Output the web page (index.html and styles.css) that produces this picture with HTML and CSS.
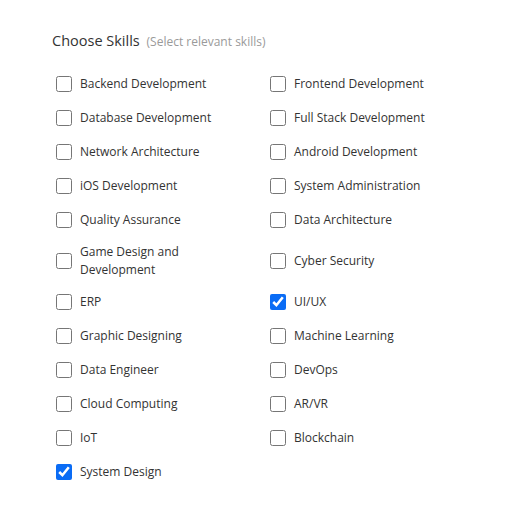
FILE: index.html
```html
<!DOCTYPE html>
<html>
<head>
<meta charset="utf-8">
<link rel="stylesheet" href="styles.css">
</head>
<body>
<div class="panel">
  <div class="title">Choose Skills <span class="hint">(Select relevant skills)</span></div>
  <div class="grid">
    <label class="item"><input type="checkbox"><span>Backend Development</span></label>
    <label class="item"><input type="checkbox"><span>Frontend Development</span></label>
    <label class="item"><input type="checkbox"><span>Database Development</span></label>
    <label class="item"><input type="checkbox"><span>Full Stack Development</span></label>
    <label class="item"><input type="checkbox"><span>Network Architecture</span></label>
    <label class="item"><input type="checkbox"><span>Android Development</span></label>
    <label class="item"><input type="checkbox"><span>iOS Development</span></label>
    <label class="item"><input type="checkbox"><span>System Administration</span></label>
    <label class="item"><input type="checkbox"><span>Quality Assurance</span></label>
    <label class="item"><input type="checkbox"><span>Data Architecture</span></label>
    <label class="item"><input type="checkbox"><span>Game Design and<br>Development</span></label>
    <label class="item"><input type="checkbox"><span>Cyber Security</span></label>
    <label class="item"><input type="checkbox"><span>ERP</span></label>
    <label class="item"><input type="checkbox" checked><span>UI/UX</span></label>
    <label class="item"><input type="checkbox"><span>Graphic Designing</span></label>
    <label class="item"><input type="checkbox"><span>Machine Learning</span></label>
    <label class="item"><input type="checkbox"><span>Data Engineer</span></label>
    <label class="item"><input type="checkbox"><span>DevOps</span></label>
    <label class="item"><input type="checkbox"><span>Cloud Computing</span></label>
    <label class="item"><input type="checkbox"><span>AR/VR</span></label>
    <label class="item"><input type="checkbox"><span>IoT</span></label>
    <label class="item"><input type="checkbox"><span>Blockchain</span></label>
    <label class="item"><input type="checkbox" checked><span>System Design</span></label>
  </div>
</div>
</body>
</html>
```

FILE: styles.css
```css
html, body {
  margin: 0;
  padding: 0;
  background: #ffffff;
}
body {
  font-family: "Open Sans", "Noto Sans", sans-serif;
  color: #333333;
}
.panel {
  padding: 31px 0 0 52px;
}
.title {
  font-size: 14.5px;
  line-height: 20px;
  color: #333333;
}
.hint {
  font-size: 12px;
  color: #9a9a9a;
  margin-left: 3px;
}
.grid {
  display: grid;
  grid-template-columns: 214px 214px;
  row-gap: 13px;
  margin-top: 21px;
  padding-left: 4px;
  align-items: center;
}
.item {
  display: flex;
  align-items: center;
  min-height: 21px;
  font-size: 12px;
  line-height: 17.5px;
  color: #333333;
}
.item input {
  width: 16px;
  height: 16px;
  margin: 0 8px 0 0;
  flex: none;
  accent-color: #0a6cf5;
}
```
